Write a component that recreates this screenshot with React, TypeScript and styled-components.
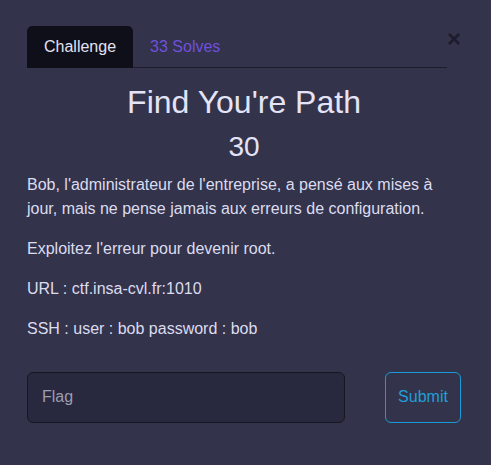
import React from "react";
import styled, { createGlobalStyle } from "styled-components";

const GlobalStyle = createGlobalStyle`
  html, body {
    margin: 0;
    padding: 0;
    background: #33334b;
  }
  body {
    font-family: "Liberation Sans", Arial, sans-serif;
    color: #e2e2f3;
  }
`;

const Modal = styled.div`
  box-sizing: border-box;
  width: 491px;
  min-height: 465px;
  padding: 26px 30px 0 27px;
  background: #33334b;
`;

const Header = styled.div`
  display: flex;
  align-items: flex-start;
`;

const Tabs = styled.nav`
  flex: 1;
  display: flex;
  border-bottom: 1px solid #1d1c2c;
`;

const Tab = styled.button<{ $active?: boolean }>`
  font-family: inherit;
  font-size: 16px;
  line-height: 24px;
  padding: 8px 16px;
  margin-bottom: -1px;
  border: 1px solid ${(p) => (p.$active ? "#0f0f1a" : "transparent")};
  border-radius: 5px 5px 0 0;
  background: ${(p) => (p.$active ? "#0f0f1a" : "transparent")};
  color: ${(p) => (p.$active ? "#e2e2f3" : "#7050dc")};
  cursor: pointer;
`;

const Close = styled.button`
  width: 14px;
  margin-top: 1px;
  padding: 0;
  border: 0;
  background: transparent;
  font-family: inherit;
  font-size: 24px;
  font-weight: 700;
  line-height: 24px;
  color: #1c1c2c;
  cursor: pointer;
`;

const Body = styled.div`
  padding-right: 0;
`;

const Title = styled.h2`
  margin: 15px 0 9px;
  font-size: 32px;
  font-weight: 400;
  line-height: 1.2;
  text-align: center;
  color: #e4e4f6;
`;

const Value = styled.h3`
  margin: 0 0 9px;
  font-size: 28px;
  font-weight: 400;
  line-height: 1.2;
  text-align: center;
  color: #e4e4f6;
`;

const Text = styled.p`
  margin: 0 0 16px;
  font-size: 16px;
  line-height: 24px;
  color: #dcdcef;
`;

const Form = styled.form`
  display: flex;
  gap: 40px;
  margin-top: 31px;
`;

const FlagInput = styled.input`
  box-sizing: border-box;
  width: 318px;
  height: 51px;
  padding: 0 14px;
  border: 1px solid #17171f;
  border-radius: 6px;
  background: #28283e;
  font-family: inherit;
  font-size: 16px;
  color: #e2e2f3;
  outline: none;
  &::placeholder {
    color: #9d9db0;
  }
`;

const Submit = styled.button`
  box-sizing: border-box;
  width: 76px;
  height: 51px;
  padding: 0;
  border: 1px solid #1a9ad6;
  border-radius: 6px;
  background: transparent;
  font-family: inherit;
  font-size: 16px;
  color: #229ed8;
  cursor: pointer;
`;

export default function App() {
  return (
    <>
      <GlobalStyle />
      <Modal>
        <Header>
          <Tabs>
            <Tab $active>Challenge</Tab>
            <Tab>33 Solves</Tab>
          </Tabs>
          <Close aria-label="Close">×</Close>
        </Header>
        <Body>
          <Title>Find You're Path</Title>
          <Value>30</Value>
          <Text>
            Bob, l'administrateur de l'entreprise, a pensé aux mises à jour,
            mais ne pense jamais aux erreurs de configuration.
          </Text>
          <Text>Exploitez l'erreur pour devenir root.</Text>
          <Text>URL : ctf.insa-cvl.fr:1010</Text>
          <Text>SSH : user : bob password : bob</Text>
          <Form onSubmit={(e) => e.preventDefault()}>
            <FlagInput placeholder="Flag" />
            <Submit type="submit">Submit</Submit>
          </Form>
        </Body>
      </Modal>
    </>
  );
}
